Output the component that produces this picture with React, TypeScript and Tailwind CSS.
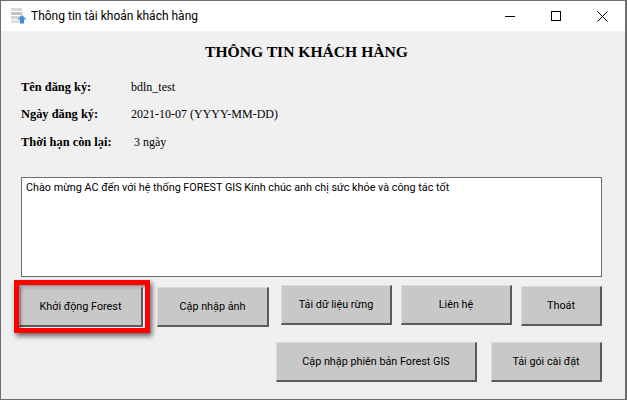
const serif = "font-['Liberation_Serif',serif]";
const sans = "font-['Roboto',sans-serif]";

const WinButton = ({ label, className }: { label: string; className: string }) => (
  <button
    className={`h-10 shrink-0 bg-[#c8c8c8] pt-[2px] border-t border-l border-t-[#dcdcdc] border-l-[#dcdcdc] border-b-2 border-r-2 border-b-[#5a5a5a] border-r-[#5a5a5a] text-[10.8px] text-black ${sans} ${className}`}
  >
    {label}
  </button>
);

const AppIcon = () => (
  <svg width="18" height="18" viewBox="0 0 18 18">
    <rect x="1" y="1" width="11" height="3" fill="#d9d9d9" />
    <rect x="1" y="5" width="11" height="3" fill="#c4c4c4" />
    <rect x="1" y="9" width="11" height="3" fill="#d4d4d4" />
    <rect x="1" y="13" width="9" height="3" fill="#e0e0e0" />
    <path d="M12 8l4.500 4.500h-2.500v4h-4v-4h-2.500z" fill="#3f8fd0" />
  </svg>
);

const InfoRow = ({ label, value, className, valueClass }: { label: string; value: string; className: string; valueClass?: string }) => (
  <div className={`flex items-center text-[12px] leading-[16px] ${serif} ${className}`}>
    <span className="ml-[20px] w-[110px] text-[12.4px] font-bold text-black">{label}</span>
    <span className={`text-black ${valueClass ?? ''}`}>{value}</span>
  </div>
);

export default function App() {
  return (
    <div className="relative w-[627px] h-[400px] overflow-hidden bg-[#f0f0f0] border border-[#6d6d6d] border-r-2 border-r-[#6d6d6d]">
      {/* Title bar */}
      <div className="flex h-[30px] items-center bg-white">
        <div className="ml-[9px] mr-[3px] flex items-center">
          <AppIcon />
        </div>
        <span className={`text-[12px] text-black ${sans}`}>Thông tin tài khoản khách hàng</span>
        <div className="ml-auto flex h-full items-center">
          <div className="flex w-[46px] justify-center">
            <div className="h-px w-[10px] bg-black" />
          </div>
          <div className="flex w-[46px] justify-center">
            <div className="h-[10px] w-[10px] border border-black" />
          </div>
          <div className="flex w-[46px] justify-center">
            <svg width="11" height="11" viewBox="0 0 11 11" stroke="black" fill="none">
              <path d="M0.500 0.500l10 10M10.500 0.500l-10 10" />
            </svg>
          </div>
        </div>
      </div>

      {/* Content */}
      <h1 className={`mt-[11px] pr-[13px] text-center text-[15.6px] leading-[20px] font-bold text-black ${serif}`}>
        THÔNG TIN KHÁCH HÀNG
      </h1>

      <InfoRow label="Tên đăng ký:" value="bdln_test" className="mt-[17px]" />
      <InfoRow label="Ngày đăng ký:" value="2021-10-07 (YYYY-MM-DD)" className="mt-[11px]" />
      <InfoRow label="Thời hạn còn lại:" value="3 ngày" valueClass="pl-[3px]" className="mt-[12px]" />

      <div className={`ml-[20px] mt-[27px] h-[100px] w-[581px] border border-[#6d6d6d] bg-white px-[4px] py-[2px] text-[10.8px] leading-[16px] text-black ${sans}`}>
        Chào mừng AC đến với hệ thống FOREST GIS Kính chúc anh chị sức khỏe và công tác tốt
      </div>

      {/* Buttons */}
      <div className="mt-[8px] flex items-start">
        <WinButton label="Khởi động Forest" className="ml-[18px] mt-[2px] w-[124px]" />
        <WinButton label="Cập nhập ảnh" className="ml-[14px] mt-[2px] w-[112px]" />
        <WinButton label="Tải dữ liệu rừng" className="ml-[12px] w-[111px]" />
        <WinButton label="Liên hệ" className="ml-[9px] w-[111px]" />
        <WinButton label="Thoát" className="ml-[9px] mt-px w-[81px]" />
      </div>
      <div className="mt-[15px] flex items-start">
        <WinButton label="Cập nhập phiên bản Forest GIS" className="ml-[275px] w-[201px]" />
        <WinButton label="Tải gói cài đặt" className="ml-[14px] w-[111px]" />
      </div>

      {/* Red highlight over the first button */}
      <div className="pointer-events-none absolute left-[13px] top-[279px] h-[53px] w-[136px] border-[5px] border-[#ff0000] shadow-[2px_3px_5px_rgba(0,0,0,0.6),inset_2px_2px_3px_rgba(0,0,0,0.45)]" />
    </div>
  );
}
